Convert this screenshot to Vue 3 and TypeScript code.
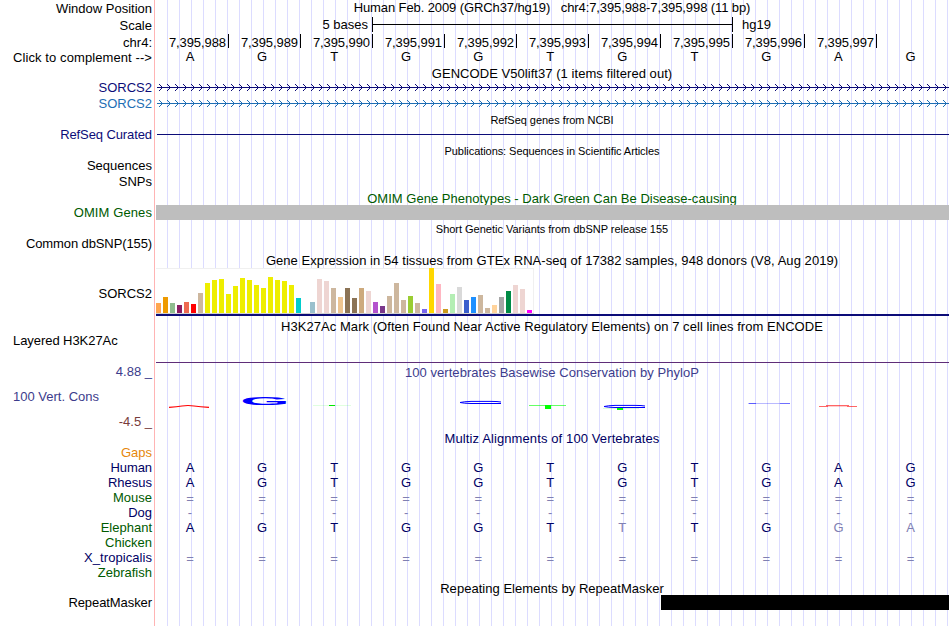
<template>
  <div class="browser">
    <div class="labels">
      <div
        v-for="(row, i) in rows"
        :key="i"
        class="label"
        :class="[row.tone, { left: row.left, raised: row.raised }]"
        :style="{ height: row.h + 'px' }"
      >
        <span :style="{ letterSpacing: (row.labelSpacing || 0) + 'px' }">{{ row.label }}</span>
        <span v-if="row.low" class="low">{{ row.low }}</span>
      </div>
    </div>

    <div class="tracks">
      <div
        v-for="(row, i) in rows"
        :key="i"
        class="track"
        :class="row.kind"
        :style="{ height: row.h + 'px' }"
      >
        <div
          v-if="row.title"
          class="title"
          :class="[row.titleTone, { small: row.small, first: i === 0, lowered: row.h === 15 && !row.small && !row.flat }]"
        >
          <span :style="{ letterSpacing: (row.spacing || 0) + 'px' }">{{ row.title }}</span>
        </div>

        <template v-else-if="row.kind === 'scale'">
          <span class="scale-left">5 bases</span>
          <div class="scale-bar"></div>
          <span class="scale-right">hg19</span>
        </template>

        <template v-else-if="row.kind === 'ruler'">
          <div v-for="n in 10" :key="n" class="tick">7,395,{{ 987 + n }}</div>
        </template>

        <template v-else-if="row.kind === 'bases'">
          <span
            v-for="(base, n) in row.bases"
            :key="n"
            :class="[
              row.baseTone,
              {
                pale: row.pale?.includes(n) || '=-'.includes(base),
                gap: base === '=',
                reference: !row.tone,
              },
            ]"
            >{{ base }}</span
          >
        </template>

        <svg
          v-else-if="row.kind === 'gene'"
          :class="row.tone"
          width="794"
          height="16"
          shape-rendering="crispEdges"
        >
          <path d="M2 7.5H794" />
          <path v-if="row.arrows" :d="arrows" stroke-linecap="square" />
        </svg>

        <div v-else-if="row.kind === 'gtex'" class="chart">
          <div
            v-for="(bar, n) in tissues"
            :key="n"
            class="bar"
            :style="{ height: bar[0] + 'px', background: bar[1] }"
          ></div>
        </div>

        <svg v-else-if="row.kind === 'logo'" width="794" height="50">
          <path class="red" d="M14 27.4Q22 27 27 26Q33 25 39 26Q45 27 54 27.4" />
          <text class="letter" transform="translate(85.2 24.8) scale(6.35 1.08)">G</text>
          <rect x="158" y="25" width="38" height="1" fill="#0f0" opacity=".12" />
          <rect x="174" y="25" width="6" height="1" fill="#00e800" />
          <path class="blue" d="M346 22Q343 21.4 336 21.4H316Q309 21.6 305 22.5Q309 23.4 316 23.5H346" />
          <rect x="374" y="25" width="37" height="1" fill="#0f0" opacity=".6" />
          <rect x="390" y="25" width="6" height="4" fill="#0f0" />
          <path class="blue" d="M490 26Q487 25.4 480 25.4H460Q453 25.6 449 26.5Q453 27.4 460 27.5H490" />
          <rect x="448" y="28" width="36" height="1" fill="#0f0" opacity=".15" />
          <rect x="462" y="28" width="6" height="2" fill="#0f0" />
          <rect x="593" y="23" width="42" height="1" fill="#00f" opacity=".27" />
          <rect x="594" y="23" width="7" height="1" fill="#00f" opacity=".5" />
          <rect x="625" y="23" width="10" height="1" fill="#00f" opacity=".4" />
          <path class="faint" d="M664 26.5H673M671 25.5H694M692 26.5H702" />
          <path class="faint haze" d="M673 26.5H692" />
        </svg>
      </div>
    </div>
  </div>
</template>

<script setup lang="ts">
interface Row {
  h: number
  label?: string
  labelSpacing?: number
  low?: string
  tone?: string
  left?: boolean
  raised?: boolean
  kind?: string
  title?: string
  titleTone?: string
  small?: boolean
  flat?: boolean
  spacing?: number
  bases?: string
  baseTone?: string
  pale?: number[]
  arrows?: boolean
}

const sequence = 'AGTGGTGTGAG'

const rows: Row[] = [
  { h: 17, label: 'Window Position', title: 'Human Feb. 2009 (GRCh37/hg19)\u00a0\u00a0 chr4:7,395,988-7,395,998 (11 bp)', spacing: -0.1 },
  { h: 17, label: 'Scale', kind: 'scale' },
  { h: 16, label: 'chr4:', kind: 'ruler' },
  { h: 15, label: 'Click to complement -->', labelSpacing: 0.09, kind: 'bases', bases: sequence },
  { h: 15, title: 'GENCODE V50lift37 (1 items filtered out)', spacing: 0.05 },
  { h: 16, label: 'SORCS2', raised: true, tone: 'navy', kind: 'gene', arrows: true },
  { h: 16, label: 'SORCS2', raised: true, tone: 'azure', kind: 'gene', arrows: true },
  { h: 15, title: 'RefSeq genes from NCBI', small: true, spacing: -0.04 },
  { h: 16, label: 'RefSeq Curated', labelSpacing: -0.1, raised: true, tone: 'navy', kind: 'gene' },
  { h: 15, title: 'Publications: Sequences in Scientific Articles', small: true, spacing: -0.06 },
  { h: 16, label: 'Sequences', raised: true },
  { h: 16, label: 'SNPs', raised: true },
  { h: 15, title: 'OMIM Gene Phenotypes - Dark Green Can Be Disease-causing', titleTone: 'green', spacing: 0.02 },
  { h: 15, label: 'OMIM Genes', labelSpacing: 0.1, tone: 'green', kind: 'omim' },
  { h: 17, title: 'Short Genetic Variants from dbSNP release 155', small: true, spacing: -0.02 },
  { h: 15, label: 'Common dbSNP(155)', labelSpacing: -0.11, raised: true },
  { h: 16, title: 'Gene Expression in 54 tissues from GTEx RNA-seq of 17382 samples, 948 donors (V8, Aug 2019)', spacing: 0.055 },
  { h: 51, label: 'SORCS2', kind: 'gtex' },
  { h: 15, title: 'H3K27Ac Mark (Often Found Near Active Regulatory Elements) on 7 cell lines from ENCODE', flat: true, spacing: 0.05 },
  { h: 30, label: 'Layered H3K27Ac', labelSpacing: -0.06, left: true, kind: 'layered' },
  { h: 16, label: '4.88 _', raised: true, tone: 'slate', title: '100 vertebrates Basewise Conservation by PhyloP', titleTone: 'slate', spacing: 0.04 },
  { h: 50, label: '100 Vert. Cons', low: '-4.5 _', left: true, tone: 'slate', kind: 'logo' },
  { h: 16, title: 'Multiz Alignments of 100 Vertebrates', titleTone: 'deep', spacing: 0.11 },
  { h: 14, label: 'Gaps', raised: true, tone: 'orange' },
  { h: 15, label: 'Human', labelSpacing: -0.1, tone: 'deep', kind: 'bases', bases: sequence, baseTone: 'deep' },
  { h: 15, label: 'Rhesus', tone: 'deep', kind: 'bases', bases: sequence, baseTone: 'deep' },
  { h: 15, label: 'Mouse', tone: 'green', kind: 'bases', bases: '===========' },
  { h: 15, label: 'Dog', tone: 'deep', kind: 'bases', bases: '-----------' },
  { h: 15, label: 'Elephant', tone: 'green', kind: 'bases', bases: 'AGTGGTTTGGA', baseTone: 'deep', pale: [6, 9, 10] },
  { h: 15, label: 'Chicken', tone: 'green' },
  { h: 15, label: 'X_tropicalis', labelSpacing: 0.06, tone: 'deep', kind: 'bases', bases: '===========' },
  { h: 15, label: 'Zebrafish', tone: 'green' },
  { h: 15, title: 'Repeating Elements by RepeatMasker', spacing: 0.03 },
  { h: 15, label: 'RepeatMasker', labelSpacing: -0.08, kind: 'repeat' },
  { h: 16 },
]

// strand chevrons, one every 8px
const arrows = Array.from({ length: 99 }, (_, i) => `M${4.5 + i * 8} 4.5l3 3l-3 3`).join('')

const tan = '#cdb79e'
const brain = '#eeee00'
const rose = '#eed5d2'

const tissues: [number, string][] = [
  [10, '#ffa54f'], [16, '#ee9a00'], [10, '#8fbc8f'], [8, '#8b1c62'], [11, '#ee6a50'], [9, '#ff0000'],
  [20, tan], [30, brain], [33, brain], [34, brain], [19, brain], [27, brain], [35, brain],
  [33, brain], [28, brain], [25, brain], [36, brain], [33, brain], [32, brain], [28, brain],
  [15, '#00cdcd'], [0, '#ee82ee'], [11, '#9ac0cd'], [34, rose], [32, rose], [25, tan],
  [16, '#eec591'], [25, '#8b7355'], [15, '#8b7355'], [25, '#cdaa7d'], [22, rose], [11, '#b452cd'],
  [7, '#7a378b'], [17, tan], [30, tan], [13, tan], [17, '#9acd32'], [10, tan], [4, '#7a67ee'],
  [45, '#ffd700'], [29, '#ffb6c1'], [4, '#cd9b1d'], [19, '#b4eeb4'], [26, '#d9d9d9'],
  [13, '#3a5fcd'], [16, '#1e90ff'], [18, tan], [5, tan], [8, '#ffd39b'], [16, '#a6a6a6'],
  [22, '#008b45'], [28, rose], [24, rose], [3, '#ff00ff'],
]
</script>

<style>
body {
  background: #fff;
}
</style>

<style scoped>
.browser {
  display: flex;
  width: 949px;
  height: 626px;
  overflow: hidden;
  font: 13px 'Liberation Sans', Arial, sans-serif;
  color: #000;
  white-space: nowrap;
}

.labels {
  width: 154px;
  flex: none;
}

.label {
  display: flex;
  align-items: center;
  justify-content: flex-end;
  box-sizing: border-box;
  padding-right: 2px;
}

.label.raised {
  padding-bottom: 2px;
}

.label.left {
  align-items: flex-start;
  justify-content: space-between;
  padding-left: 13px;
  margin-top: -1px;
  margin-bottom: 1px;
}

.label.left.slate {
  padding-top: 10px;
}

.low {
  align-self: flex-end;
  color: #783c3c;
}

.tracks {
  flex: 1;
  border-left: 1px solid #ffb4b4;
  background: repeating-linear-gradient(90deg, #dcdcff 0 1px, transparent 1px 12px) 12px 0 no-repeat;
}

.track {
  display: flex;
}

.title {
  flex: 1;
  display: flex;
  align-items: center;
  justify-content: center;
  box-sizing: border-box;
}

.title.small {
  font-size: 11px;
}

.title.first {
  padding-bottom: 2px;
}

.title.lowered {
  padding-top: 2px;
}

.scale-left {
  box-sizing: border-box;
  width: 217px;
  padding-right: 4px;
  text-align: right;
}

.scale-bar {
  box-sizing: border-box;
  width: 361px;
  height: 15px;
  border: solid #000;
  border-width: 0 1px;
  background: linear-gradient(#000, #000) 0 7px / 100% 1px no-repeat;
}

.scale-right {
  padding-left: 9px;
}

.scale span {
  line-height: 16px;
}

.ruler {
  padding-left: 2px;
}

.tick {
  box-sizing: border-box;
  width: 72px;
  height: 14px;
  padding: 1px 2px 0 0;
  border-right: 1px solid #000;
  letter-spacing: -0.08px;
  text-align: right;
}

.bases {
  align-items: center;
}

.bases span {
  width: 72.05px;
  flex: none;
  text-align: center;
  text-indent: -2px;
}

.bases .reference {
  padding-bottom: 2px;
}

.bases .gap {
  padding: 2px 0 0;
}

svg {
  display: block;
}

.gene path {
  fill: none;
  stroke: currentColor;
}

.omim::before {
  content: '';
  flex: 1;
  margin-left: 1px;
  background: #bebebe;
}

.gtex {
  box-sizing: border-box;
  padding-left: 1px;
  background: linear-gradient(#0c0c78, #0c0c78) 1px 46px / 100% 2px no-repeat;
}

.chart {
  box-sizing: border-box;
  display: flex;
  align-items: flex-end;
  gap: 2px;
  width: 378px;
  height: 46px;
  border-bottom: 1px solid #d0d0d0;
  background: #fff;
  box-shadow: inset 0 1px #f0f0f0, inset -1px 0 #f0f0f0;
}

.bar {
  width: 5px;
}

.layered::before {
  content: '';
  flex: 1;
  margin: 28px 0 1px 1px;
  background: #5f2d78;
}

.repeat::before {
  content: '';
  flex: 1;
  margin-left: 506px;
  background: #000;
}

.letter {
  font: bold 10px 'Liberation Sans', Arial, sans-serif;
  fill: #00f;
}

.logo path {
  fill: none;
}

.red {
  stroke: #f00;
  stroke-width: 1.2;
}

.blue {
  stroke: #00f;
}

.faint {
  stroke: #f00;
  opacity: 0.6;
}

.faint.haze {
  opacity: 0.2;
}

.navy {
  color: #0c0c78;
}

.azure {
  color: #1e6eb4;
}

.green {
  color: #005a00;
}

.slate {
  color: #3c3c8c;
}

.deep {
  color: #000064;
}

.orange {
  color: #e6870a;
}

.bases .pale {
  color: #8080b2;
}

.bases .reference {
  color: #000;
}
</style>
